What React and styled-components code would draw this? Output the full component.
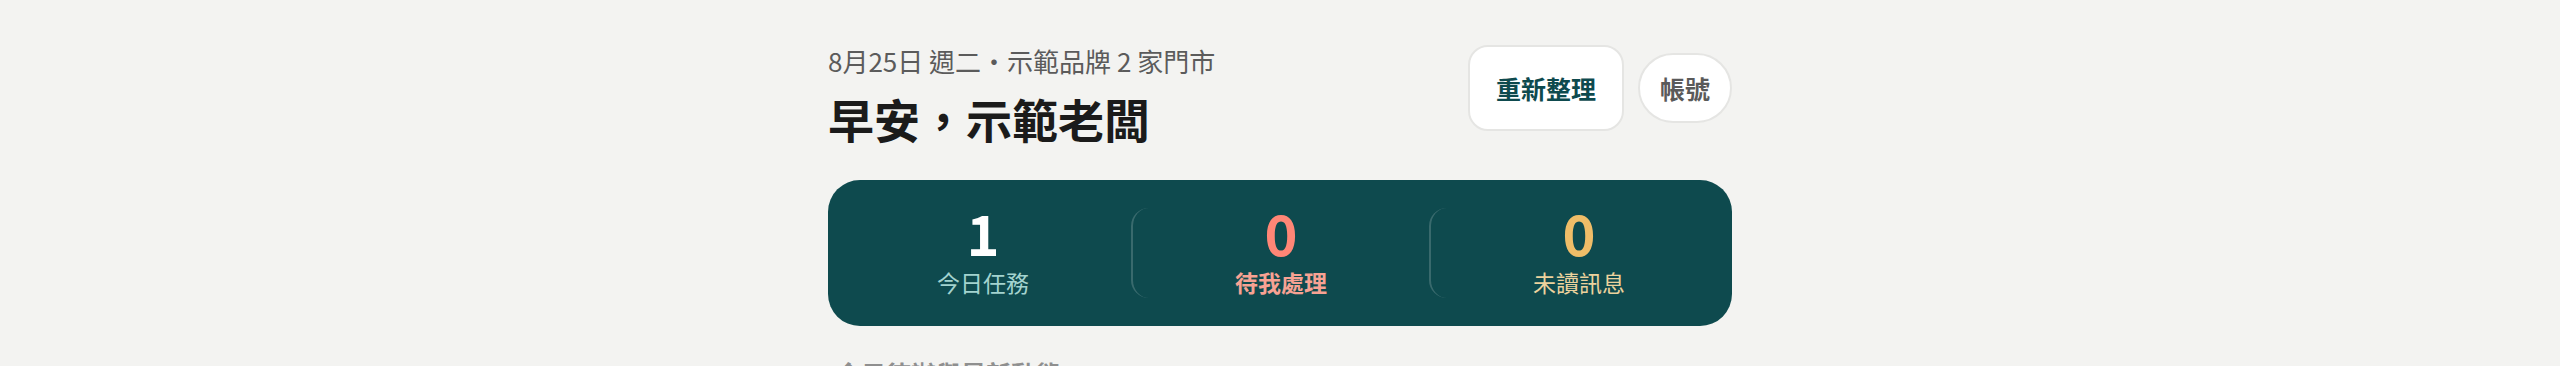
import React from "react";
import styled, { createGlobalStyle } from "styled-components";

const GlobalStyle = createGlobalStyle`
  html, body {
    margin: 0;
    padding: 0;
    background: #f3f3f1;
  }
  body {
    font-family: "Noto Sans CJK TC", "Noto Sans", sans-serif;
    color: #1b1b1b;
  }
  * { box-sizing: border-box; }
`;

const Page = styled.main`
  max-width: 904px;
  margin: 0 auto;
  padding-top: 44px;
`;

const Header = styled.header`
  display: flex;
  justify-content: space-between;
  align-items: flex-start;
`;

const Greeting = styled.div`
  display: flex;
  flex-direction: column;
`;

const Meta = styled.div`
  font-size: 26px;
  line-height: 34px;
  color: #5b5b5b;
`;

const Title = styled.h1`
  margin: 10px 0 0;
  font-size: 46px;
  line-height: 60px;
  font-weight: 700;
  color: #1b1b1b;
`;

const Actions = styled.div`
  display: flex;
  align-items: center;
  gap: 14px;
  margin-top: 1px;
`;

const Button = styled.button`
  font-family: "Noto Sans CJK TC", sans-serif;
  font-weight: 700;
  font-size: 25px;
  background: #ffffff;
  border: 2px solid #e5e5e3;
  cursor: pointer;
  color: ${(p) => (p.$primary ? "#0e4a4e" : "#5a5a5a")};
  height: ${(p) => (p.$primary ? "86px" : "70px")};
  padding: ${(p) => (p.$primary ? "0 26px" : "0 20px")};
  border-radius: ${(p) => (p.$primary ? "20px" : "999px")};
  line-height: 1;
`;

const StatsCard = styled.section`
  margin-top: 32px;
  background: #0e4a4e;
  border-radius: 32px;
  padding: 28px 5px;
  display: grid;
  grid-template-columns: repeat(3, 1fr);
`;

const Stat = styled.div`
  height: 90px;
  display: flex;
  flex-direction: column;
  align-items: center;
  justify-content: flex-start;
  border-radius: 18px;
  border-left: ${(p) => (p.$divider ? "2px solid rgba(255,255,255,0.18)" : "2px solid transparent")};
`;

const StatValue = styled.div`
  font-size: 56px;
  line-height: 48px;
  font-weight: 700;
  color: ${(p) => p.$color};
`;

const StatLabel = styled.div`
  margin-top: 12px;
  font-size: 23px;
  line-height: 28px;
  font-weight: ${(p) => (p.$bold ? 700 : 400)};
  color: ${(p) => p.$color};
`;

const SectionTitle = styled.h2`
  margin: 30px 0 0 8px;
  font-size: 25px;
  line-height: 34px;
  font-weight: 700;
  color: #8f8f8f;
`;

const stats = [
  { value: "1", label: "今日任務", valueColor: "#ffffff", labelColor: "#a3d3cf" },
  { value: "0", label: "待我處理", valueColor: "#ff8676", labelColor: "#f7a293", bold: true },
  { value: "0", label: "未讀訊息", valueColor: "#efbd68", labelColor: "#ecd29d" },
];

export default function App() {
  return (
    <>
      <GlobalStyle />
      <Page>
        <Header>
          <Greeting>
            <Meta>8月25日 週二・示範品牌 2 家門市</Meta>
            <Title>早安，示範老闆</Title>
          </Greeting>
          <Actions>
            <Button $primary>重新整理</Button>
            <Button>帳號</Button>
          </Actions>
        </Header>
        <StatsCard>
          {stats.map((s, i) => (
            <Stat key={s.label} $divider={i > 0}>
              <StatValue $color={s.valueColor}>{s.value}</StatValue>
              <StatLabel $color={s.labelColor} $bold={s.bold}>{s.label}</StatLabel>
            </Stat>
          ))}
        </StatsCard>
        <SectionTitle>今日待辦與最新動態</SectionTitle>
      </Page>
    </>
  );
}
